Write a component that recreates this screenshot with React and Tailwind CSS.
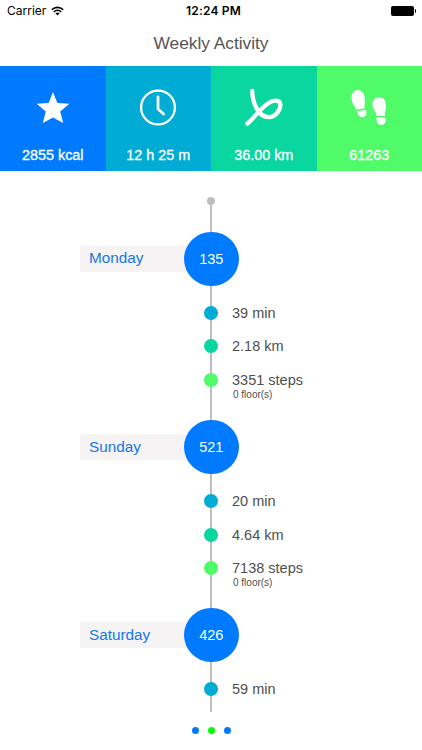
import React from "react";

const totals = [
  { id: "kcal", value: "2855 kcal", bg: "bg-[#007aff]", Icon: StarIcon },
  { id: "time", value: "12 h 25 m", bg: "bg-[#00abd4]", Icon: ClockIcon },
  { id: "distance", value: "36.00 km", bg: "bg-[#0ad6a0]", Icon: RouteIcon },
  { id: "steps", value: "61263", bg: "bg-[#4ffb69]", Icon: StepsIcon },
];

const days = [
  { name: "Monday", kcal: 135, time: "39 min", distance: "2.18 km", steps: "3351 steps", floors: "0 floor(s)" },
  { name: "Sunday", kcal: 521, time: "20 min", distance: "4.64 km", steps: "7138 steps", floors: "0 floor(s)" },
  { name: "Saturday", kcal: 426, time: "59 min" },
];

function StarIcon() {
  return (
    <svg viewBox="0 0 40 40" className="w-10 h-10" fill="#fff">
      <path d="M20 4 L24.4 15 L36.4 15.8 L27.2 23.4 L30.2 35 L20 29.4 L9.8 35 L12.8 23.4 L3.6 15.8 L15.6 15 Z" />
    </svg>
  );
}

function ClockIcon() {
  return (
    <svg viewBox="0 0 40 40" className="w-10 h-10" fill="none" stroke="#fff" strokeLinecap="round" strokeLinejoin="round">
      <circle cx="20" cy="19.5" r="16.9" strokeWidth="2.3" />
      <path d="M20 9 V21 L25.6 26" strokeWidth="2.8" />
    </svg>
  );
}

function RouteIcon() {
  return (
    <svg viewBox="0 0 40 40" className="w-10 h-10" fill="none" stroke="#fff" strokeWidth="4.3" strokeLinecap="round">
      <path d="M8.2 3 C8.6 15 14 28.6 24.5 29.2 C31.6 29.6 36.6 21.6 36.4 16.6 C36 11.4 29.5 11.2 22.5 16.4 C16 21.2 10.4 29.4 3.4 35.6" />
    </svg>
  );
}

function StepsIcon() {
  return (
    <svg viewBox="0 0 40 40" className="w-10 h-10" fill="#fff">
      <path d="M8.2 2.1 C12.8 1.6 15.6 5.6 15.8 11 C15.9 14.6 15.4 17.4 15.6 20.3 L7 21.8 C6 17.8 2.6 15.6 2.5 9.8 C2.5 5.6 5 2.5 8.2 2.1 Z" />
      <path d="M8.2 23.2 L17 21.8 C18.2 25.8 17 28.6 14.1 29.1 C11 29.6 8.7 27.4 8.2 23.2 Z" />
      <path d="M30.9 9.2 C34.8 9.4 37 12.8 36.9 17.2 C36.7 22.4 36 24 35.9 28 L27.3 27.5 C27.3 23.4 23.2 21.4 23.3 15.8 C23.5 11.8 26.8 9 30.9 9.2 Z" />
      <path d="M27.6 29.4 L36.7 29.8 C37.2 34.4 35.5 36.8 32.4 36.8 C28.7 36.8 27.2 34.2 27.6 29.4 Z" />
    </svg>
  );
}

const StatusBar = () => (
  <div className="relative h-[22px] flex items-center justify-between pl-[7px] pr-[6px] font-[Inter,sans-serif] text-black">
    <div className="flex items-center">
      <span className="text-[12px]">Carrier</span>
      <svg viewBox="0 0 14 10" className="w-[13px] h-[10px] ml-[5px] -mt-px" fill="none" stroke="#000" strokeWidth="1.7">
        <path d="M0.8 3.7 C4.4 0.2 9.6 0.2 13.2 3.7" />
        <path d="M3 6 C5.4 3.8 8.6 3.8 11 6" />
        <path d="M4.7 7.4 C6 6.3 8 6.3 9.3 7.4 L7 9.8 Z" fill="#000" stroke="none" />
      </svg>
    </div>
    <span className="absolute left-[5px] right-0 text-center text-[12px] font-semibold tracking-[0.2px]">
      12:24 PM
    </span>
    <div className="flex items-center">
      <div className="w-[23px] h-[10px] bg-black rounded-[2px]" />
      <div className="w-[1.5px] h-[4px] ml-[0.5px] bg-black rounded-r-full" />
    </div>
  </div>
);

const Item = ({ color, text, note }) => (
  <div className="grid grid-cols-[184px_54px_1fr] h-[33.5px] items-center">
    <div className={`col-start-2 justify-self-center w-[14px] h-[14px] rounded-full ${color}`} />
    <div className="relative -ml-[6px] text-[14.5px] text-[#4f4f4f] leading-4">
      {text}
      {note && (
        <span className="absolute left-[1px] top-[17px] text-[10px] leading-3">{note}</span>
      )}
    </div>
  </div>
);

const Day = ({ day }) => (
  <section className="h-[188.2px]">
    <div className="grid grid-cols-[80px_104px_54.6px] items-center h-[54.6px] mb-[10px]">
      <div className="col-start-2 -mr-4 h-[26px] pl-[9px] flex items-center bg-[#f5f3f4] text-[15.3px] text-[#1578e8]">
        {day.name}
      </div>
      <div className="relative w-[54.6px] h-[54.6px] pt-[2px] rounded-full bg-[#007aff] text-white text-[14.5px] flex items-center justify-center">
        {day.kcal}
      </div>
    </div>
    <Item color="bg-[#00abd4]" text={day.time} />
    {day.distance && <Item color="bg-[#0ad6a0]" text={day.distance} />}
    {day.steps && <Item color="bg-[#4ffb69]" text={day.steps} note={day.floors} />}
  </section>
);

const App = () => {
  return (
    <div className="w-[422px] h-[750px] flex flex-col overflow-hidden bg-white font-['Liberation_Sans',Arial,sans-serif]">
      <header className="h-[65.5px] shrink-0">
        <StatusBar />
        <h1 className="text-center text-[17.4px] tracking-[-0.05px] leading-[43px] text-[#555]">
          Weekly Activity
        </h1>
      </header>

      <div className="grid grid-cols-4 h-[105px] shrink-0">
        {totals.map(({ id, value, bg, Icon }) => (
          <div key={id} className={`flex flex-col items-center pt-[22px] text-white ${bg}`}>
            <Icon />
            <span className="mt-[17px] text-[14.4px] leading-5 [-webkit-text-stroke:0.3px_white]">{value}</span>
          </div>
        ))}
      </div>

      <main className="relative h-[541px] shrink-0 overflow-hidden pt-[61px]">
        <div className="absolute left-[210px] top-[30px] bottom-0 w-[2px] bg-[#bfbdbf]" />
        <div className="absolute left-[207px] top-[26px] w-[8px] h-[8px] rounded-full bg-[#bfbdbf]" />
        <div className="relative">
          {days.map((day) => (
            <Day key={day.name} day={day} />
          ))}
        </div>
      </main>

      <div className="flex justify-center gap-[9px] pt-[15px]">
        <span className="w-[7px] h-[7px] rounded-full bg-[#007aff]" />
        <span className="w-[7px] h-[7px] rounded-full bg-[#00ff00]" />
        <span className="w-[7px] h-[7px] rounded-full bg-[#007aff]" />
      </div>
    </div>
  );
};

export default App;
